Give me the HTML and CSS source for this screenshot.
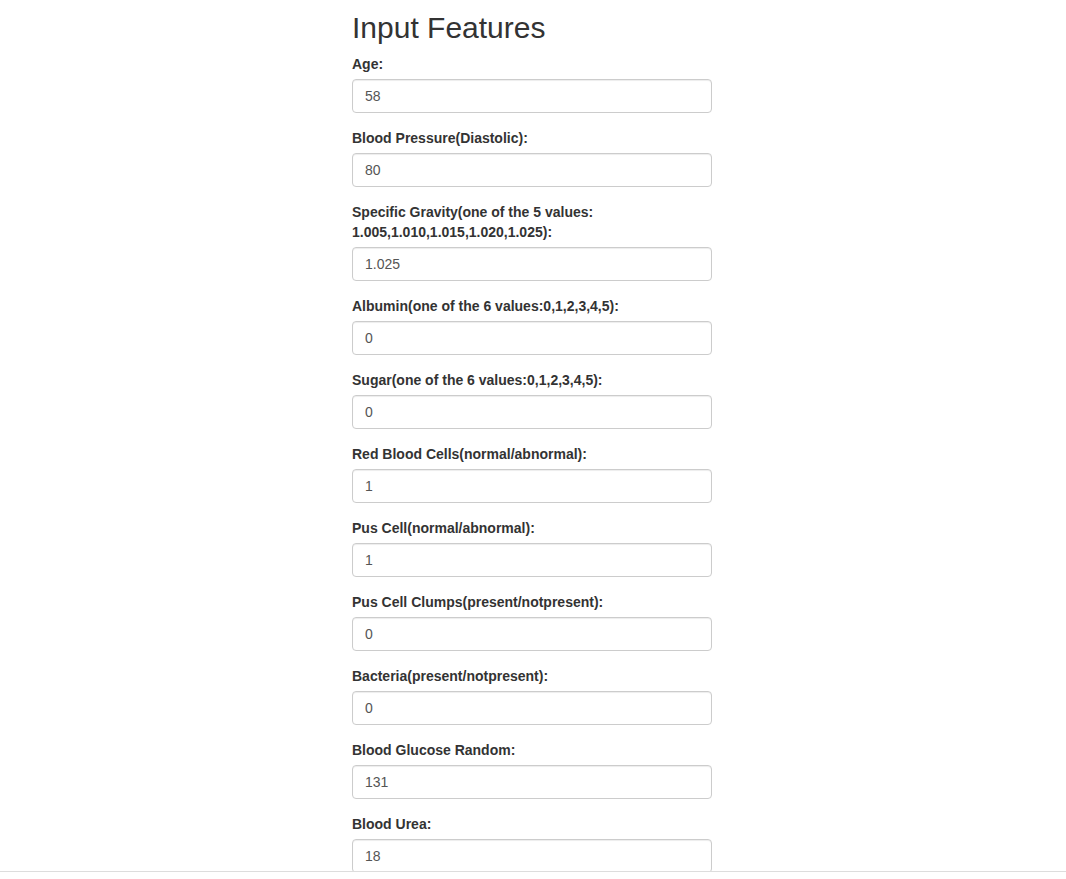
FILE: index.html
```html
<!DOCTYPE html>
<html lang="en">
<head>
<meta charset="utf-8">
<title>Input Features</title>
<link rel="stylesheet" href="styles.css">
</head>
<body>
<div class="page">
  <form class="col">
    <h2 class="title">Input Features</h2>
    <div class="form-group"><label>Age:</label><input class="form-control" type="text" value="58"></div>
    <div class="form-group"><label>Blood Pressure(Diastolic):</label><input class="form-control" type="text" value="80"></div>
    <div class="form-group"><label>Specific Gravity(one of the 5 values: 1.005,1.010,1.015,1.020,1.025):</label><input class="form-control" type="text" value="1.025"></div>
    <div class="form-group"><label>Albumin(one of the 6 values:0,1,2,3,4,5):</label><input class="form-control" type="text" value="0"></div>
    <div class="form-group"><label>Sugar(one of the 6 values:0,1,2,3,4,5):</label><input class="form-control" type="text" value="0"></div>
    <div class="form-group"><label>Red Blood Cells(normal/abnormal):</label><input class="form-control" type="text" value="1"></div>
    <div class="form-group"><label>Pus Cell(normal/abnormal):</label><input class="form-control" type="text" value="1"></div>
    <div class="form-group"><label>Pus Cell Clumps(present/notpresent):</label><input class="form-control" type="text" value="0"></div>
    <div class="form-group"><label>Bacteria(present/notpresent):</label><input class="form-control" type="text" value="0"></div>
    <div class="form-group"><label>Blood Glucose Random:</label><input class="form-control" type="text" value="131"></div>
    <div class="form-group"><label>Blood Urea:</label><input class="form-control" type="text" value="18"></div>
  </form>
</div>
<div class="bottom-bar"></div>
</body>
</html>
```
FILE: styles.css
```css
* { box-sizing: border-box; }
html, body { margin: 0; padding: 0; background: #fff; }
body {
  font-family: "Liberation Sans", Arial, Helvetica, sans-serif;
  font-size: 14px;
  line-height: 1.42857143;
  color: #333;
}
.page {
  display: flex;
  justify-content: center;
  padding-right: 2px;
}
.col {
  width: 360px;
  margin: 0;
}
.title {
  font-family: "Liberation Sans", Arial, Helvetica, sans-serif;
  font-weight: 400;
  font-size: 30px;
  line-height: 1.1;
  color: #333;
  margin: 11px 0 10px;
}
.form-group { margin-bottom: 15px; }
label {
  display: inline-block;
  max-width: 100%;
  margin-bottom: 5px;
  font-weight: 700;
}
.form-control {
  display: block;
  width: 100%;
  height: 34px;
  padding: 6px 12px;
  font-family: inherit;
  font-size: 14px;
  line-height: 1.42857143;
  color: #555;
  background-color: #fff;
  border: 1px solid #ccc;
  border-radius: 4px;
  box-shadow: inset 0 1px 1px rgba(0, 0, 0, .075);
  margin: 0;
}
.bottom-bar {
  position: fixed;
  left: 0;
  right: 0;
  bottom: 0;
  height: 8px;
  background: #fff;
  border-top: 1px solid #ddd;
}
```
